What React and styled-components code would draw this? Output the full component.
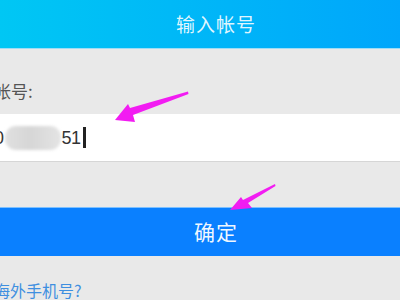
import React from "react";
import styled, { createGlobalStyle } from "styled-components";

const Global = createGlobalStyle`
  html, body { margin: 0; padding: 0; }
  body {
    width: 400px; height: 300px; overflow: hidden;
    background: #e9e9e9;
    font-family: "Noto Sans CJK SC", "Noto Sans", sans-serif;
  }
`;

const Page = styled.div`
  position: relative;
  width: 400px;
  height: 300px;
  overflow: hidden;
  display: flex;
  flex-direction: column;
`;

const Header = styled.header`
  height: 48px;
  flex: none;
  display: flex;
  align-items: center;
  justify-content: center;
  padding-left: 32px;
  background: linear-gradient(to right, #00c7f4, #00a6fb);
  border-bottom: 1px solid #9fdcf5;
`;

const Title = styled.h1`
  margin: 0 0 2px 0;
  font-size: 19px;
  font-weight: 400;
  color: rgba(255, 255, 255, 0.9);
  letter-spacing: 1px;
`;

const Label = styled.div`
  margin: 31px 0 0 -6px;
  font-size: 17px;
  line-height: 21px;
  color: #555;
`;

const Field = styled.div`
  margin-top: 13px;
  height: 51px;
  background: #fff;
  border-bottom: 1px solid #d6d6d6;
  display: flex;
  align-items: center;
  font-size: 18px;
  color: #333;
`;

const Digits = styled.span`
  margin-left: ${(p) => p.$offset || 0}px;
  line-height: 24px;
  letter-spacing: -0.5px;
  font-family: "Liberation Sans", sans-serif;
`;

const Blur = styled.span`
  display: inline-block;
  width: 56px;
  height: 24px;
  margin: 0 1px 0 1px;
  border-radius: 11px;
  background: linear-gradient(to right, #e0e0e0, #d6d6d6 45%, #e4e4e4);
  filter: blur(1.5px);
`;

const Caret = styled.span`
  display: inline-block;
  width: 3px;
  height: 21px;
  margin-left: 2px;
  background: #222;
`;

const Button = styled.button`
  margin-top: 45px;
  height: 52px;
  border: none;
  border-top: 1px solid #7cc0ff;
  background: #0a80ff;
  color: rgba(255, 255, 255, 0.95);
  font-family: inherit;
  font-size: 21px;
  padding: 0 0 2px 32px;
  letter-spacing: 1px;
`;

const Link = styled.a`
  margin: 24px 0 0 -6px;
  font-size: 16px;
  line-height: 20px;
  color: #3f8fe0;
  text-decoration: none;
`;

const Overlay = styled.svg`
  position: absolute;
  left: 0;
  top: 0;
  pointer-events: none;
`;

export default function App() {
  return (
    <>
      <Global />
      <Page>
        <Header>
          <Title>输入帐号</Title>
        </Header>
        <Label>帐号:</Label>
        <Field>
          <Digits $offset={-6}>0</Digits>
          <Blur />
          <Digits>51</Digits>
          <Caret />
        </Field>
        <Button>确定</Button>
        <Link>海外手机号?</Link>
        <Overlay width="400" height="300" viewBox="0 0 400 300">
          <path d="M115,120 L128,104 L130,108 L188,91.5 L188.5,94 L133,115 L135,122 Z" fill="#f21cf2" />
          <path d="M230,210 L241,197 L243,200 L275,184 L275.5,186 L248,203 L252,208 Z" fill="#f21cf2" />
        </Overlay>
      </Page>
    </>
  );
}
